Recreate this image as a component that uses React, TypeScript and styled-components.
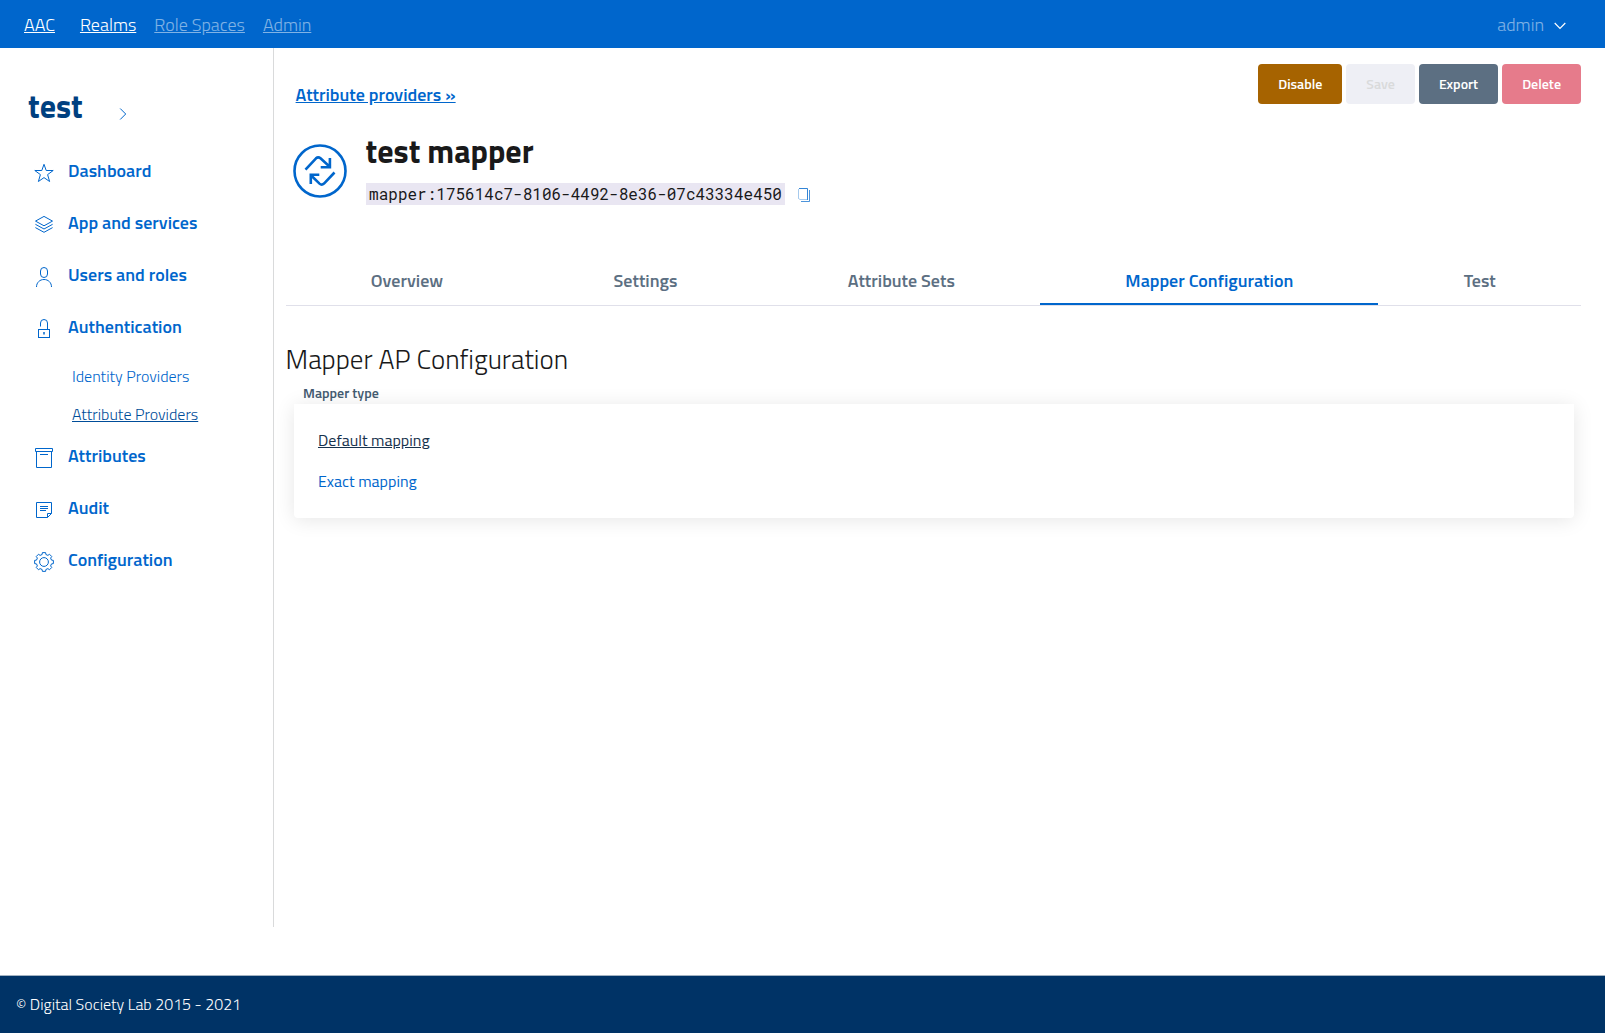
import React from "react";
import styled, { createGlobalStyle, css } from "styled-components";

const sans = `"Titillium Web", Roboto, "Liberation Sans", sans-serif`;
const mono = `"Roboto Mono", "Liberation Mono", monospace`;
const blue = "#0066cc";

const GlobalStyle = createGlobalStyle`
  *, *::before, *::after { box-sizing: border-box; }
  body { margin: 0; background: #fff; color: #19191a; font-family: ${sans}; font-size: 18px; font-weight: 300; }
`;

const Page = styled.div`
  display: flex;
  flex-direction: column;
  height: 1033px;
`;

/* Top bar */
const TopBar = styled.header`
  display: flex;
  align-items: center;
  height: 48px;
  padding: 2px 37.5px 0 24px;
  background: ${blue};
`;
const Brand = styled.a`
  margin-right: 25px;
  color: #fff;
  line-height: 28px;
  text-decoration: underline;
`;
const Menu = styled.nav`
  display: flex;
  gap: 18px;
`;
const MenuLink = styled.a<{ $active?: boolean }>`
  color: ${(p) => (p.$active ? "#fff" : "rgba(255, 255, 255, 0.5)")};
  line-height: 28px;
  text-decoration: underline;
`;
const UserMenu = styled.div`
  display: flex;
  align-items: center;
  gap: 7.5px;
  margin-left: auto;
  color: rgba(255, 255, 255, 0.5);
  line-height: 28px;
`;

/* Body */
const Body = styled.div`
  display: flex;
  flex: none;
  height: 879px;
`;
const Sidebar = styled.aside`
  flex: none;
  width: 274px;
  border-right: 1px solid #d9dadb;
`;
const Realm = styled.div`
  display: flex;
  align-items: flex-start;
  gap: 36px;
  height: 96px;
  padding: 38px 0 0 28px;
`;
const RealmName = styled.h2`
  margin: 0;
  color: #004080;
  font-size: 32px;
  font-weight: 700;
  line-height: 40px;
`;
const RealmToggle = styled.span`
  display: flex;
  margin-top: 20.5px;
`;
const SideItem = styled.a`
  display: flex;
  align-items: center;
  gap: 12px;
  height: 52px;
  padding: 2px 0 0 32px;
  color: ${blue};
  font-weight: 600;
  line-height: 24px;
`;
const SideIcon = styled.svg`
  flex: none;
  width: 24px;
  height: 24px;
  margin-top: 4px;
  fill: none;
  stroke: ${blue};
  stroke-width: 1;
`;
const SubList = styled.div`
  display: flex;
  flex-direction: column;
  align-items: flex-start;
  gap: 14px;
  padding: 12px 0 3px 72px;
`;
const SubLink = styled.a<{ $active?: boolean }>`
  color: ${blue};
  font-size: 16px;
  line-height: 24px;
  ${(p) => p.$active && css`color: #004d99; text-decoration: underline;`}
`;

/* Main column */
const Main = styled.main`
  flex: 1;
  min-width: 0;
  padding: 16px 24px 0 11.6px;
`;
const Header = styled.div`
  display: flex;
  justify-content: space-between;
  align-items: flex-start;
  height: 67px;
`;
const BackLink = styled.a`
  margin: 17px 0 0 10px;
  color: ${blue};
  font-weight: 600;
  line-height: 28px;
  text-decoration: underline;
`;
const Actions = styled.div`
  display: flex;
  gap: 4px;
`;
const tones = {
  warning: css`background: #a66300; color: #fff;`,
  muted: css`background: #eeeff5; color: #d9dadb;`,
  secondary: css`background: #5c6f82; color: #fff;`,
  danger: css`background: #e67b8b; color: #fff;`,
};
const Button = styled.button<{ $tone: keyof typeof tones }>`
  height: 40px;
  padding: 0 20px;
  border: 0;
  border-radius: 4px;
  font: 600 14px/24px ${sans};
  ${(p) => tones[p.$tone]}
`;
const Provider = styled.section`
  display: flex;
  gap: 17.6px;
  height: 125px;
  padding-left: 6.4px;
`;
const ProviderIcon = styled.svg`
  flex: none;
  width: 56px;
  height: 56px;
  margin-top: 12px;
  fill: none;
  stroke: ${blue};
  stroke-width: 2.6;
`;
const ProviderInfo = styled.div`
  display: flex;
  flex-direction: column;
  gap: 12px;
`;
const Title = styled.h1`
  margin: 0;
  font-size: 32px;
  font-weight: 700;
  line-height: 40px;
`;
const IdRow = styled.div`
  display: flex;
  align-items: center;
  gap: 12px;
  height: 22px;
`;
const Code = styled.code`
  padding: 0 3.5px;
  background: #e9e6f2;
  color: #19191a;
  font: 400 16px/22px ${mono};
`;
const CopyIcon = styled.svg`
  width: 14px;
  height: 16px;
  margin-top: 2px;
  fill: none;
  stroke: ${blue};
`;

const Tabs = styled.nav`
  display: flex;
  height: 50px;
  border-bottom: 1px solid #e0e0ea;
`;
const Tab = styled.a<{ $active?: boolean }>`
  flex: 1 1 auto;
  padding: 13px 24px 0;
  border-bottom: 2px solid transparent;
  color: #5c6f82;
  font-weight: 600;
  line-height: 24px;
  text-align: center;
  ${(p) => p.$active && css`color: ${blue}; border-color: ${blue};`}
`;

const SectionTitle = styled.h3`
  margin: 37px 0 0;
  font-size: 27px;
  font-weight: 300;
  line-height: 32px;
`;
const FieldLabel = styled.div`
  margin: 8px 0 0 17.4px;
  color: #435a70;
  font-size: 14px;
  font-weight: 600;
  line-height: 20px;
`;
const Card = styled.div`
  display: flex;
  flex-direction: column;
  align-items: flex-start;
  gap: 17px;
  height: 114px;
  margin: 1px 7px 0 8.4px;
  padding: 24px;
  border-radius: 0 0 4px 4px;
  background: #fff;
  box-shadow: 0 2px 20px rgba(0, 0, 0, 0.1);
`;
const Option = styled.a<{ $active?: boolean }>`
  color: ${(p) => (p.$active ? "#17324d" : blue)};
  font-size: 16px;
  font-weight: 400;
  line-height: 24px;
  text-decoration: ${(p) => (p.$active ? "underline" : "none")};
`;

const Footer = styled.footer`
  display: flex;
  align-items: center;
  height: 58px;
  margin-top: auto;
  padding: 0 0 2px 16px;
  border-top: 1px solid #a3b3c2;
  background: #003366;
  color: #fff;
  font-size: 16px;
`;

const gearPath = (() => {
  const pts: string[] = [];
  for (let i = 0; i < 8; i++) {
    const a = (i * Math.PI) / 4 - Math.PI / 2;
    const at = (r: number, d: number) =>
      `${(12 + r * Math.cos(a + d)).toFixed(2)} ${(12 + r * Math.sin(a + d)).toFixed(2)}`;
    pts.push(`${i ? "L" : "M"}${at(7.7, -0.25)}L${at(9.5, -0.17)}L${at(9.5, 0.17)}L${at(7.7, 0.25)}`);
  }
  return pts.join("") + "Z";
})();

const icons = {
  star: <path d="M12 3.3l2.2 6.200h7l-5.600 4.100 2 6.900-5.600-3.900-5.600 3.900 2-6.900-5.600-4.100h7z" />,
  layers: (
    <>
      <path d="M12 3.400l8.500 4.700-8.500 4.700-8.500-4.700z" />
      <path d="M3.400 11.300l8.600 4.700 8.600-4.700" />
      <path d="M3.400 14.600l8.600 4.700 8.600-4.700" />
    </>
  ),
  user: (
    <>
      <rect x="8.5" y="2.5" width="7" height="10" rx="3.5" />
      <path d="M4.5 22c0-4.500 3.300-7.500 7.500-7.500s7.500 3 7.500 7.500" />
    </>
  ),
  lock: (
    <>
      <rect x="6.500" y="12.500" width="11" height="8" />
      <path d="M8.500 9.500V6a3.500 3.500 0 0 1 7 0v6.500" />
      <path d="M12 15v2.500" strokeWidth="1.500" />
    </>
  ),
  archive: (
    <>
      <path d="M3.500 2.500h17v3h-17z" />
      <path d="M4.500 5.500v16h15v-16M8 8.500h8" />
    </>
  ),
  note: (
    <>
      <path d="M5 4.500h14.500v11l-4 4H4.500v-15zM15.500 19.500v-4h4" />
      <path d="M8 8.500h8M8 10.500h8M8 12.500h6" />
    </>
  ),
  gear: (
    <>
      <path d={gearPath} strokeLinejoin="round" />
      <circle cx="12" cy="12" r="4.400" />
    </>
  ),
};

function NavItem({ icon, label }: { icon: keyof typeof icons; label: string }) {
  return (
    <SideItem>
      <SideIcon viewBox="0 0 24 24">{icons[icon]}</SideIcon>
      {label}
    </SideItem>
  );
}

export default function App() {
  return (
    <Page>
      <GlobalStyle />
      <TopBar>
        <Brand>AAC</Brand>
        <Menu>
          <MenuLink $active>Realms</MenuLink>
          <MenuLink>Role Spaces</MenuLink>
          <MenuLink>Admin</MenuLink>
        </Menu>
        <UserMenu>
          admin
          <svg width="16" height="16" viewBox="0 0 16 16" fill="none" stroke="#fff" strokeWidth="1.200">
            <path d="M2.700 6L8 11.300 13.300 6" />
          </svg>
        </UserMenu>
      </TopBar>

      <Body>
        <Sidebar>
          <Realm>
            <RealmName>test</RealmName>
            <RealmToggle>
              <svg width="9" height="14" viewBox="0 0 9 14" fill="none" stroke={blue} strokeWidth="1">
                <path d="M1.200 1.500L6.700 7l-5.500 5.500" />
              </svg>
            </RealmToggle>
          </Realm>
          <NavItem icon="star" label="Dashboard" />
          <NavItem icon="layers" label="App and services" />
          <NavItem icon="user" label="Users and roles" />
          <NavItem icon="lock" label="Authentication" />
          <SubList>
            <SubLink>Identity Providers</SubLink>
            <SubLink $active>Attribute Providers</SubLink>
          </SubList>
          <NavItem icon="archive" label="Attributes" />
          <NavItem icon="note" label="Audit" />
          <NavItem icon="gear" label="Configuration" />
        </Sidebar>

        <Main>
          <Header>
            <BackLink>Attribute providers »</BackLink>
            <Actions>
              <Button $tone="warning">Disable</Button>
              <Button $tone="muted">Save</Button>
              <Button $tone="secondary">Export</Button>
              <Button $tone="danger">Delete</Button>
            </Actions>
          </Header>

          <Provider>
            <ProviderIcon viewBox="0 0 56 56">
              <circle cx="28" cy="28" r="25.500" />
              <path d="M13.500 26.700L24 15.300q2.200-2 4.500 0L38 24M28.700 24.200h9.200v-9.200" />
              <path d="M42.500 29.500L32 40.600q-2.300 2-4.500 0L18.700 32M27.300 31.800h-8.500v9.200" />
            </ProviderIcon>
            <ProviderInfo>
              <Title>test mapper</Title>
              <IdRow>
                <Code>mapper:175614c7-8106-4492-8e36-07c43334e450</Code>
                <CopyIcon viewBox="0 0 14 16">
                  <path d="M2 1.500h8.500v11.500" strokeOpacity="0.800" />
                  <path d="M1.500 2v9.500l1.500 1h7" strokeOpacity="0.350" />
                  <path d="M12.500 3v11.500H4" strokeOpacity="0.700" />
                </CopyIcon>
              </IdRow>
            </ProviderInfo>
          </Provider>

          <Tabs>
            <Tab>Overview</Tab>
            <Tab>Settings</Tab>
            <Tab>Attribute Sets</Tab>
            <Tab $active>Mapper Configuration</Tab>
            <Tab>Test</Tab>
          </Tabs>

          <SectionTitle>Mapper AP Configuration</SectionTitle>
          <FieldLabel>Mapper type</FieldLabel>
          <Card>
            <Option $active>Default mapping</Option>
            <Option>Exact mapping</Option>
          </Card>
        </Main>
      </Body>

      <Footer>© Digital Society Lab 2015 - 2021</Footer>
    </Page>
  );
}
